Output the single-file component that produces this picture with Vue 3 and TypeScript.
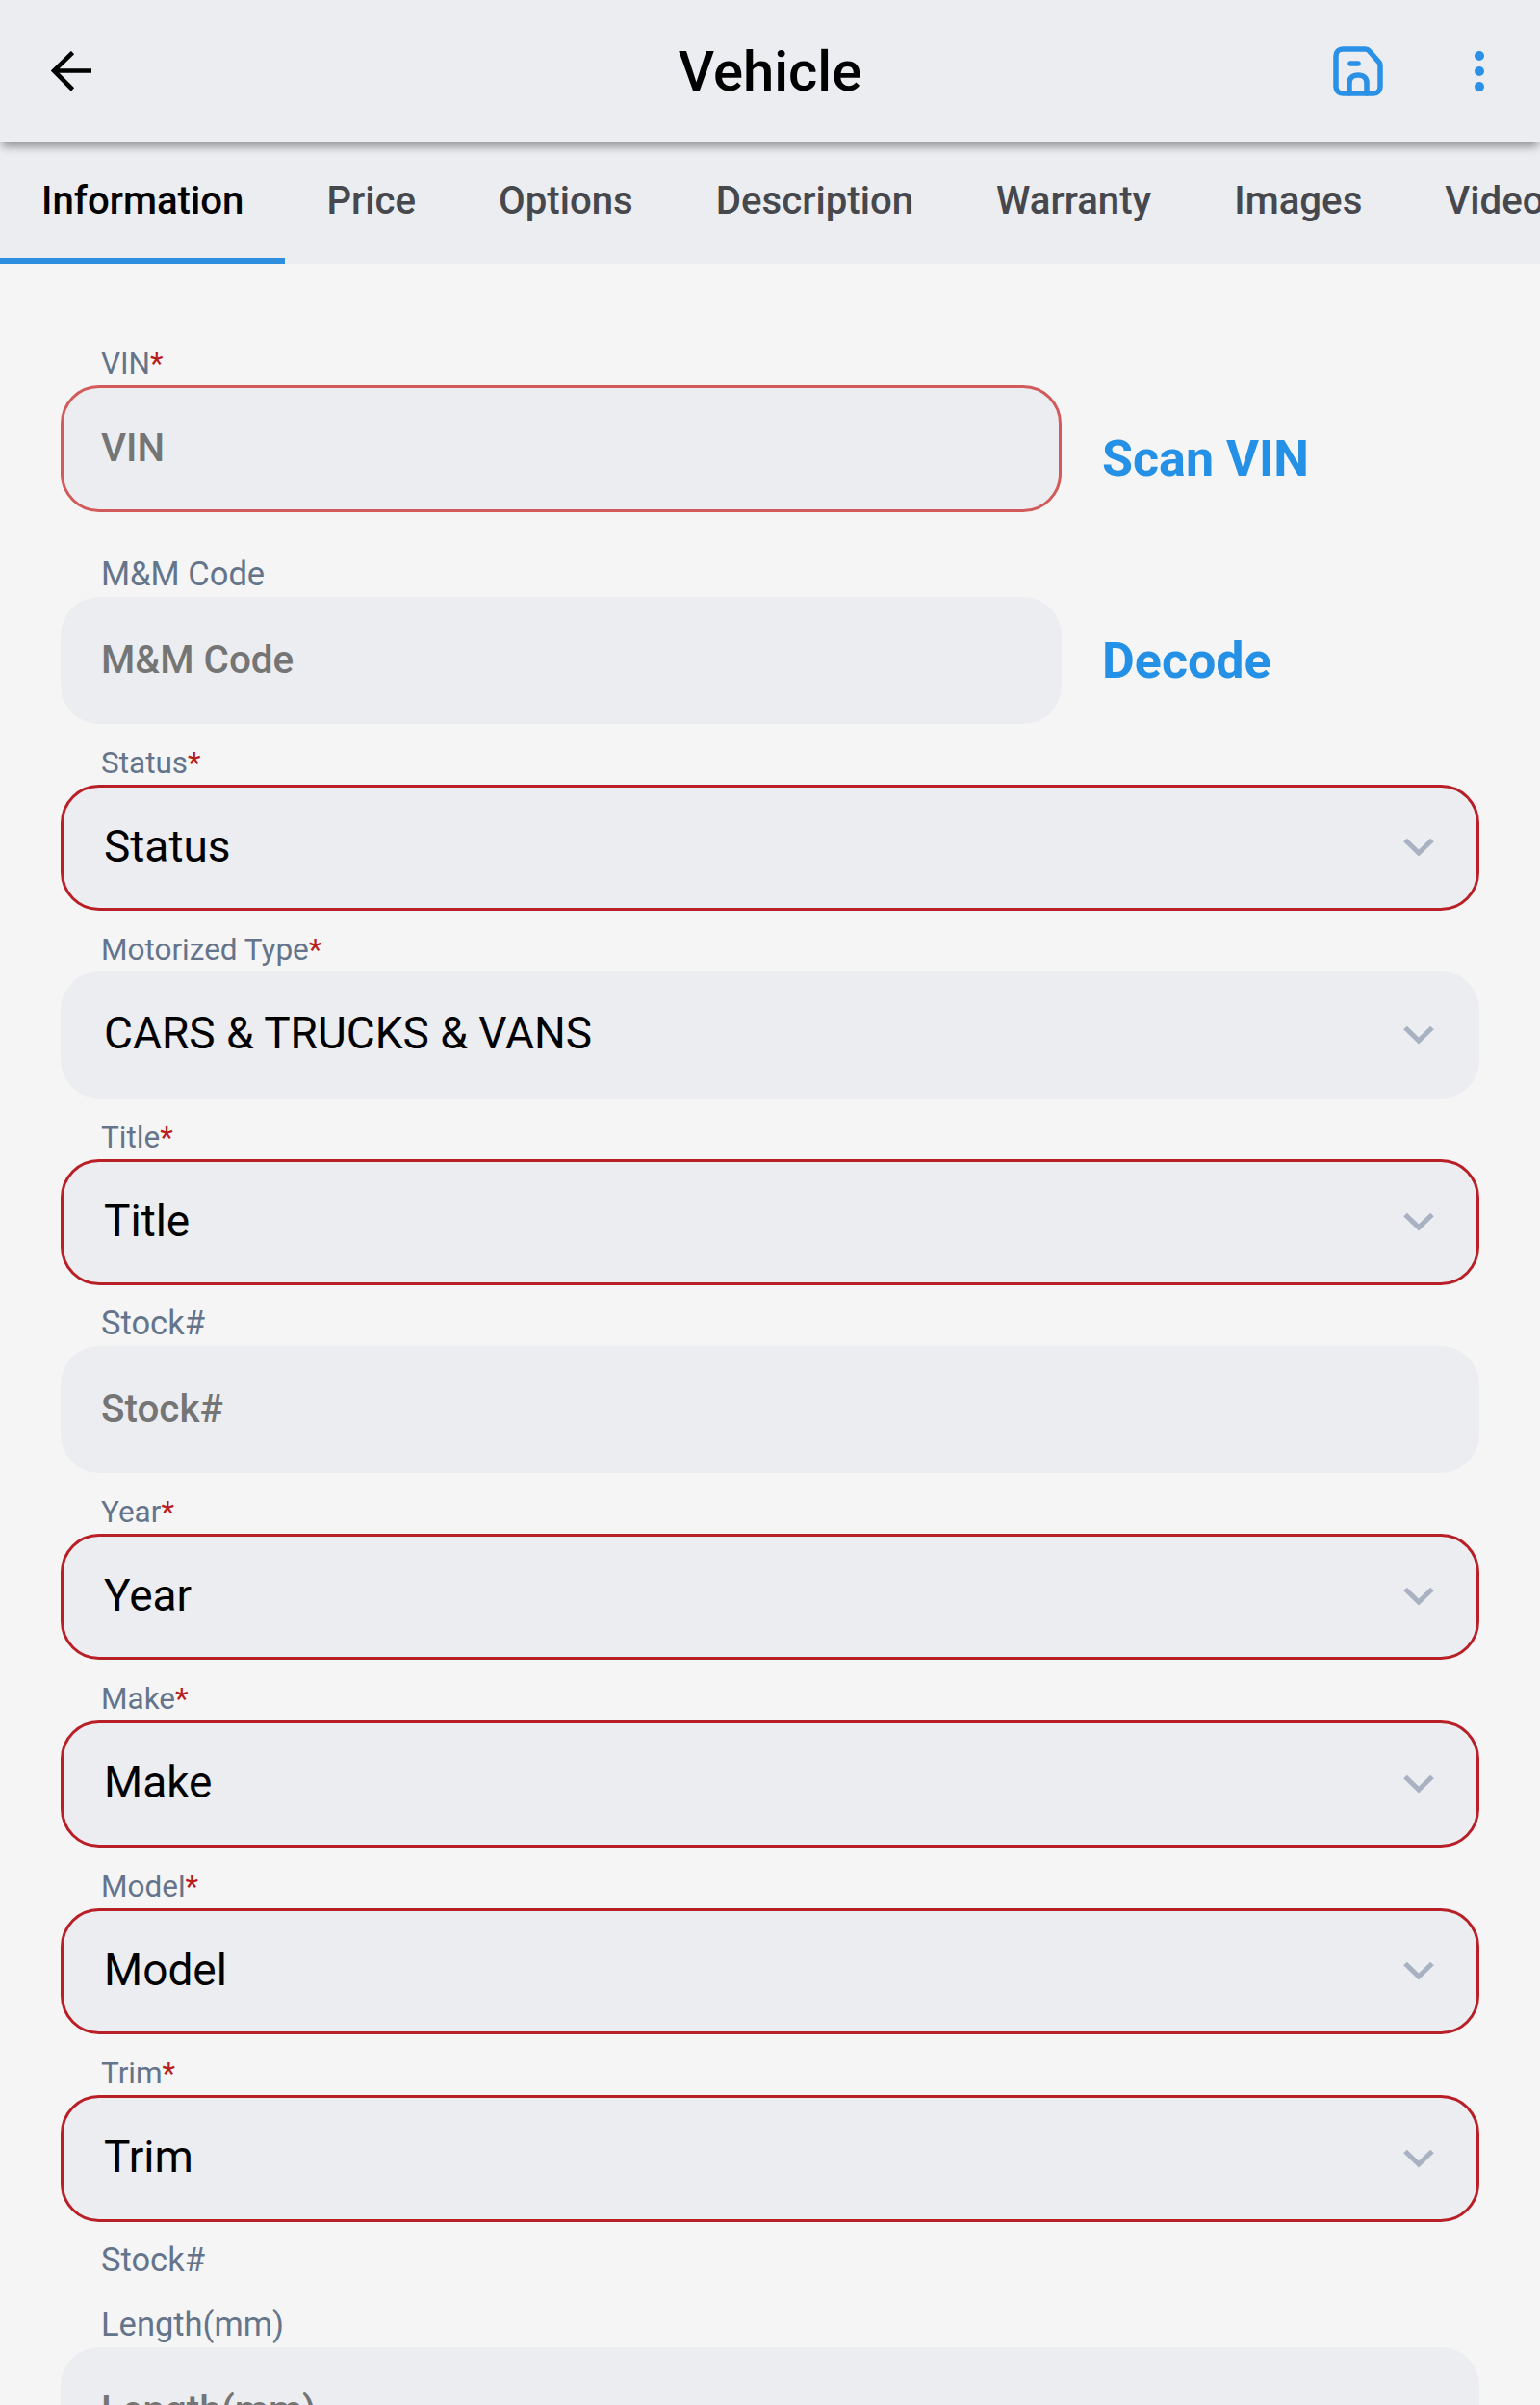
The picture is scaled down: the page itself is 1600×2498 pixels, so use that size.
<script setup lang="ts">
interface Field {
  label: string
  kind: 'input' | 'select' | 'none'
  value?: string
  required?: boolean
}
const tabs: string[] = ['Information', 'Price', 'Options', 'Description', 'Warranty', 'Images', 'Videos']
const fields: Field[] = [
  { label: 'Status', kind: 'select', value: 'Status', required: true },
  { label: 'Motorized Type', kind: 'select', value: 'CARS & TRUCKS & VANS', required: true },
  { label: 'Title', kind: 'select', value: 'Title', required: true },
  { label: 'Stock#', kind: 'input', value: 'Stock#' },
  { label: 'Year', kind: 'select', value: 'Year', required: true },
  { label: 'Make', kind: 'select', value: 'Make', required: true },
  { label: 'Model', kind: 'select', value: 'Model', required: true },
  { label: 'Trim', kind: 'select', value: 'Trim', required: true },
  { label: 'Stock#', kind: 'none' },
  { label: 'Length(mm)', kind: 'input', value: 'Length(mm)' },
]
const isInvalid = (f: Field): boolean => f.kind === 'select' && f.required === true && f.value !== 'CARS & TRUCKS & VANS'
</script>

<template>
  <div class="screen">
    <header class="appbar">
      <button class="icon-btn back" aria-label="Back">
        <svg width="42" height="42" viewBox="0 0 42 42" fill="none" stroke="#000" stroke-width="4.6">
          <path d="M43 20.5H3M22.5 1.5L3 20.5L22.5 40" />
        </svg>
      </button>
      <h1 class="title">Vehicle</h1>
      <div class="actions">
        <button class="icon-btn" aria-label="Save">
          <svg width="52" height="52" viewBox="0 0 52 52" fill="none" stroke="#2b91e6" stroke-width="5.5" stroke-linejoin="round" stroke-linecap="round">
            <path d="M10 3H33.5C35 3 36.4 3.6 37.4 4.8L47.6 16.4C48.5 17.4 49 18.7 49 20V42C49 46 46 49 42 49H10C6 49 3 46 3 42V10C3 6 6 3 10 3Z" />
            <path d="M18 18H26" />
            <path d="M17 49V38C17 33 20.5 30 26 30C31.5 30 35 33 35 38V49" />
          </svg>
        </button>
        <button class="icon-btn" aria-label="More">
          <svg width="10" height="42" viewBox="0 0 10 42" fill="#2b91e6">
            <circle cx="5" cy="5" r="5" />
            <circle cx="5" cy="21" r="5" />
            <circle cx="5" cy="37" r="5" />
          </svg>
        </button>
      </div>
    </header>

    <nav class="tabs">
      <div v-for="(t, i) in tabs" :key="t" class="tab" :class="{ active: i === 0 }">{{ t }}</div>
    </nav>

    <main class="form">
      <div class="row first">
        <div class="field grow">
          <label class="label small">VIN<span class="star">*</span></label>
          <input class="control text invalid-soft" placeholder="VIN" />
        </div>
        <button class="link scan">Scan VIN</button>
      </div>
      <div class="row">
        <div class="field grow">
          <label class="label">M&amp;M Code</label>
          <input class="control text" placeholder="M&M Code" />
        </div>
        <button class="link decode">Decode</button>
      </div>

      <div v-for="(f, i) in fields" :key="i" class="field" :class="{ bare: f.kind === 'none' }">
        <label class="label" :class="{ small: f.required }">{{ f.label }}<span v-if="f.required" class="star">*</span></label>
        <input v-if="f.kind === 'input'" class="control text" :placeholder="f.value" />
        <div v-else-if="f.kind === 'select'" class="control select" :class="{ invalid: isInvalid(f) }">
          <span>{{ f.value }}</span>
          <svg width="32" height="20" viewBox="0 0 32 20" fill="none" stroke="#a9b2c3" stroke-width="5.2">
            <path d="M2 2.5L16 16L30 2.5" />
          </svg>
        </div>
      </div>
    </main>
  </div>
</template>

<style>
html, body { margin: 0; padding: 0; background: #f5f5f5; }
</style>

<style scoped>
.screen {
  width: 1600px;
  height: 2498px;
  overflow: hidden;
  background: #f5f5f5;
  font-family: Roboto, "Liberation Sans", sans-serif;
}
.appbar {
  position: relative;
  z-index: 2;
  height: 148px;
  display: grid;
  grid-template-columns: 1fr auto 1fr;
  align-items: center;
  background: #ebedf0;
  box-shadow: 0 6px 9px -2px rgba(0, 0, 0, 0.4);
}
.icon-btn {
  display: flex;
  padding: 0;
  border: 0;
  background: none;
}
.back { margin-left: 53px; justify-self: start; }
.title {
  margin: 0 0 1px;
  font-size: 58px;
  font-weight: 500;
  color: #000;
  line-height: 1;
}
.actions {
  display: flex;
  justify-content: flex-end;
  align-items: center;
  gap: 95px;
  padding-right: 58px;
}
.tabs {
  display: flex;
  height: 126px;
  background: #ebedf0;
  overflow: hidden;
}
.tab {
  flex: none;
  box-sizing: border-box;
  height: 126px;
  padding: 0 43px;
  display: flex;
  align-items: center;
  font-size: 40.2px;
  font-weight: 500;
  color: #46484d;
  border-bottom: 6px solid transparent;
}
.tab.active {
  color: #000;
  border-bottom-color: #2f8fdf;
}
.form {
  padding: 88px 63.5px 0 63px;
}
.row {
  display: flex;
  gap: 42px;
  align-items: flex-end;
}
.row.first { margin-bottom: 50.5px; }
.grow { width: 1040px; flex: none; }
.field { margin-bottom: 25px; }
.field.bare { margin-bottom: 29px; }
.row .field { margin-bottom: 25px; }
.row.first .field { margin-bottom: 0; }
.label {
  display: block;
  height: 38px;
  padding-left: 42px;
  font-size: 34.5px;
  line-height: 29px;
  color: #64748b;
}
.label.small { font-size: 31.5px; line-height: 31px; }
.star { color: #b91c1c; }
.control {
  box-sizing: border-box;
  display: flex;
  width: 100%;
  height: 131.5px;
  border: 3px solid transparent;
  border-radius: 40px;
  background: #ecedf0;
  outline: none;
  margin: 0;
}
.text {
  padding: 0 39px;
  font-family: inherit;
  font-size: 40.4px;
  font-weight: 500;
  color: #000;
}
.text::placeholder { color: #757575; opacity: 1; }
.invalid-soft { border-color: #d35a5a; }
.select {
  align-items: center;
  justify-content: space-between;
  padding: 0 44px 0 42px;
  font-size: 46px;
  color: #000;
}
.select span { margin-bottom: 3px; }
.invalid { border-color: #b81f26; }
.link {
  padding: 0;
  border: 0;
  background: none;
  font-family: inherit;
  font-size: 52px;
  font-weight: 700;
  line-height: 60px;
  color: #2490e6;
}
.scan { margin-bottom: 25px; }
.decode { margin-bottom: 60px; }
</style>
